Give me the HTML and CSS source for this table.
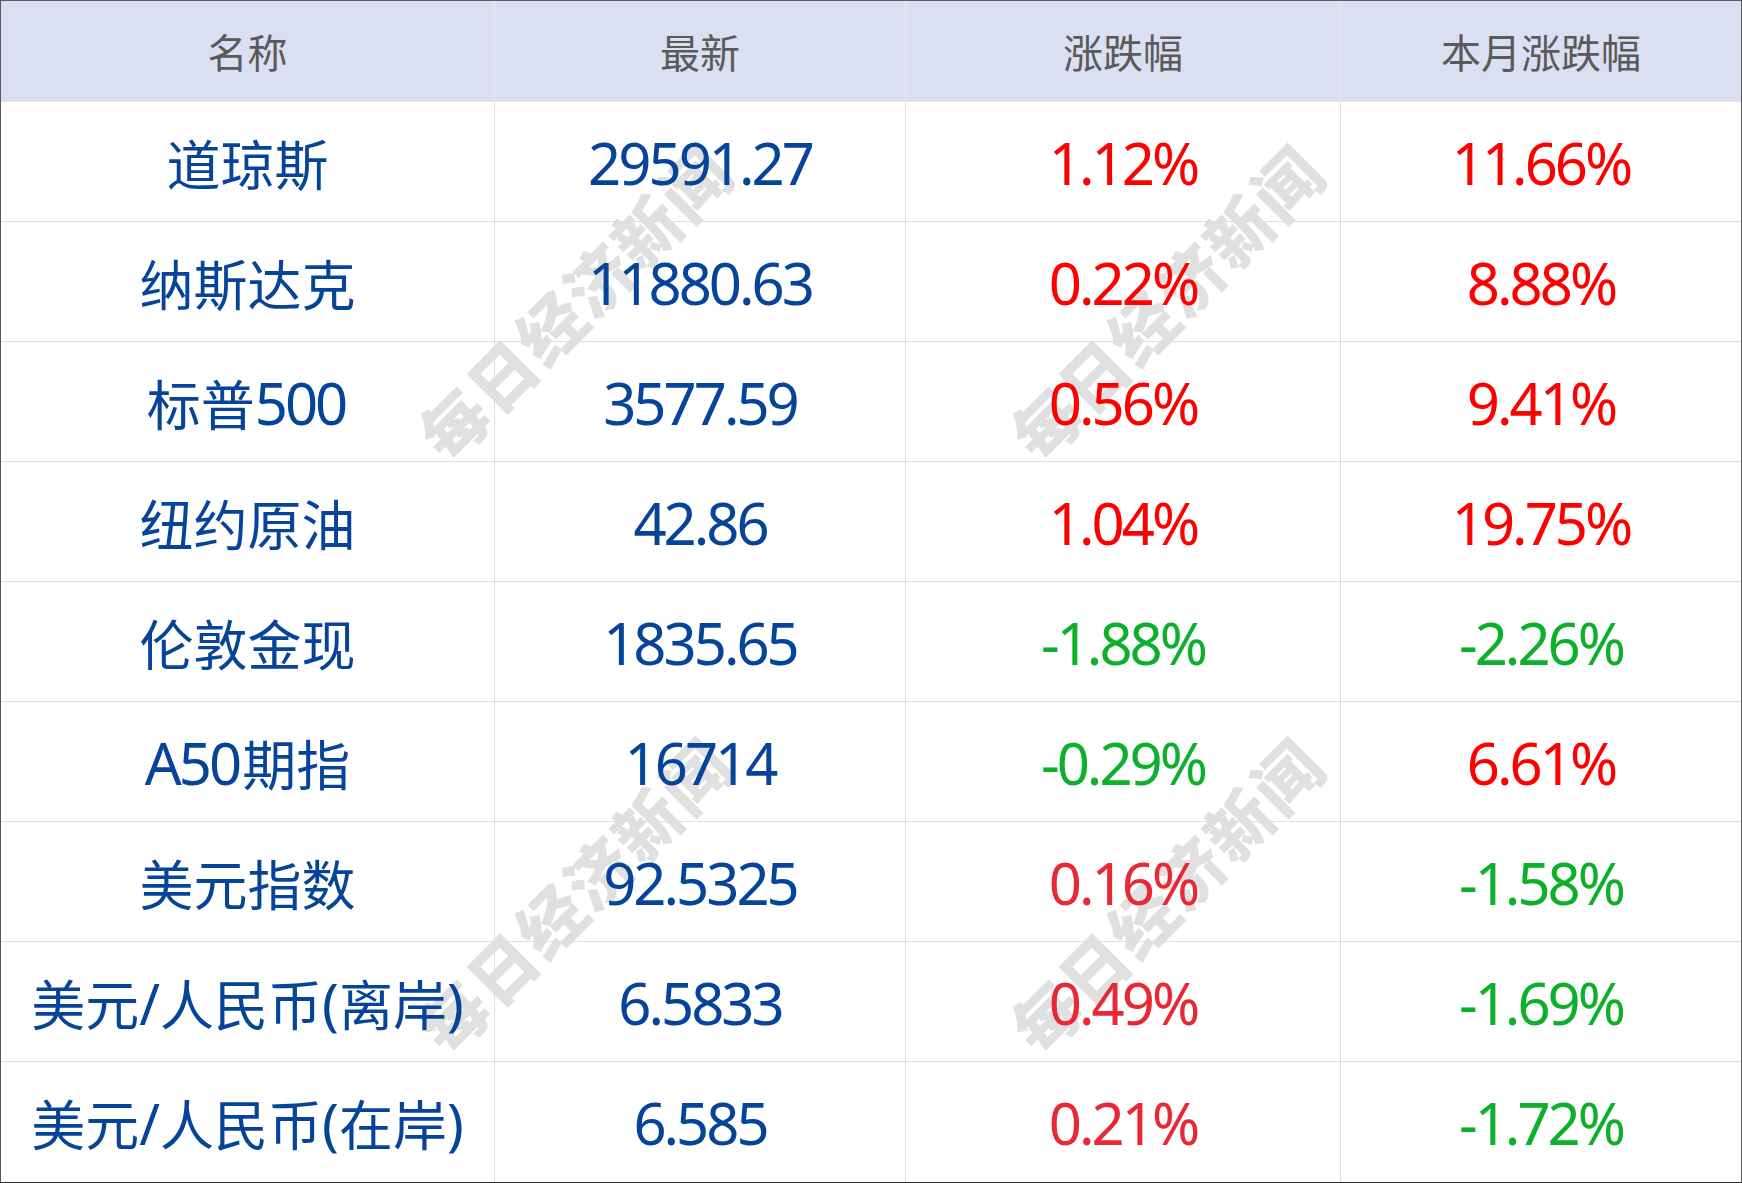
FILE: index.html
```html
<!DOCTYPE html>
<html lang="zh-CN">
<head>
<meta charset="utf-8">
<title>行情</title>
<link rel="stylesheet" href="styles.css">
</head>
<body>
<div class="board">
  <div class="watermarks">
    <span class="wm wm-1">每日经济新闻</span>
    <span class="wm wm-2">每日经济新闻</span>
    <span class="wm wm-3">每日经济新闻</span>
    <span class="wm wm-4">每日经济新闻</span>
  </div>
  <div class="grid">
    <div class="cell head">名称</div>
    <div class="cell head">最新</div>
    <div class="cell head">涨跌幅</div>
    <div class="cell head last-col">本月涨跌幅</div>

    <div class="cell name">道琼斯</div>
    <div class="cell num">29591.27</div>
    <div class="cell num up">1.12%</div>
    <div class="cell num up last-col">11.66%</div>

    <div class="cell name">纳斯达克</div>
    <div class="cell num">11880.63</div>
    <div class="cell num up">0.22%</div>
    <div class="cell num up last-col">8.88%</div>

    <div class="cell name">标普<span class="lat">500</span></div>
    <div class="cell num">3577.59</div>
    <div class="cell num up">0.56%</div>
    <div class="cell num up last-col">9.41%</div>

    <div class="cell name">纽约原油</div>
    <div class="cell num">42.86</div>
    <div class="cell num up">1.04%</div>
    <div class="cell num up last-col">19.75%</div>

    <div class="cell name">伦敦金现</div>
    <div class="cell num">1835.65</div>
    <div class="cell num down">-1.88%</div>
    <div class="cell num down last-col">-2.26%</div>

    <div class="cell name"><span class="lat">A50</span>期指</div>
    <div class="cell num">16714</div>
    <div class="cell num down">-0.29%</div>
    <div class="cell num up last-col">6.61%</div>

    <div class="cell name">美元指数</div>
    <div class="cell num">92.5325</div>
    <div class="cell num up2">0.16%</div>
    <div class="cell num down last-col">-1.58%</div>

    <div class="cell name">美元<span class="sym">/</span>人民币<span class="sym">(</span>离岸<span class="sym">)</span></div>
    <div class="cell num">6.5833</div>
    <div class="cell num up2">0.49%</div>
    <div class="cell num down last-col">-1.69%</div>

    <div class="cell name last-row">美元<span class="sym">/</span>人民币<span class="sym">(</span>在岸<span class="sym">)</span></div>
    <div class="cell num last-row">6.585</div>
    <div class="cell num up2 last-row">0.21%</div>
    <div class="cell num down last-col last-row">-1.72%</div>
  </div>
</div>
</body>
</html>
```

FILE: styles.css
```css
* {
  box-sizing: border-box;
}

html, body {
  margin: 0;
  padding: 0;
  background: #ffffff;
}

.board {
  position: relative;
  width: 1742px;
  height: 1183px;
  border-top: 1px solid #5a5a5a;
  border-left: 1px solid #5a5a5a;
  border-right: 1px solid #5a5a5a;
  border-bottom: 1px solid #2a2a2a;
  background: #ffffff;
  overflow: hidden;
  font-family: "Noto Sans", "Noto Sans CJK SC", sans-serif;
}

.grid {
  position: relative;
  z-index: 1;
  display: grid;
  grid-template-columns: 494px 411px 435px 400px;
  grid-template-rows: 101px repeat(9, 120px);
}

.cell {
  display: flex;
  align-items: center;
  justify-content: center;
  border-right: 1px solid #dedede;
  border-bottom: 1px solid #dedede;
  white-space: nowrap;
  color: #06449a;
  font-size: 54px;
  line-height: 1;
}

.cell.last-col {
  border-right: none;
}

.cell.last-row {
  border-bottom: none;
}

.head {
  background: #dae0f1;
  color: #5a5a5a;
  font-size: 40px;
  font-family: "Noto Sans CJK SC", sans-serif;
  border-right-color: #e6e9f3;
  border-bottom-color: #e4e4e4;
}

.name {
  font-family: "Noto Sans CJK SC", sans-serif;
  padding-top: 2px;
}

.name .lat {
  font-family: "Noto Sans", sans-serif;
  font-size: 58px;
  letter-spacing: -3px;
  margin-right: 3px;
}

.name .sym {
  font-family: "Noto Sans", sans-serif;
  font-size: 56px;
}

.num {
  font-size: 58px;
  letter-spacing: -3px;
  padding-top: 2px;
}

.up {
  color: #ff0000;
}

.up2 {
  color: #e82834;
}

.down {
  color: #0cb02a;
}

.watermarks {
  position: absolute;
  inset: 0;
  z-index: 0;
}

.wm {
  position: absolute;
  width: 480px;
  margin-left: -240px;
  margin-top: -40px;
  line-height: 80px;
  text-align: center;
  font-family: "Noto Sans CJK SC", sans-serif;
  font-weight: 900;
  font-size: 66px;
  letter-spacing: 2px;
  color: #e0e0e0;
  transform: rotate(-45deg);
  white-space: nowrap;
}

.wm-1 { left: 572px; top: 300px; }
.wm-2 { left: 1164px; top: 300px; }
.wm-3 { left: 572px; top: 893px; }
.wm-4 { left: 1164px; top: 893px; }
```
